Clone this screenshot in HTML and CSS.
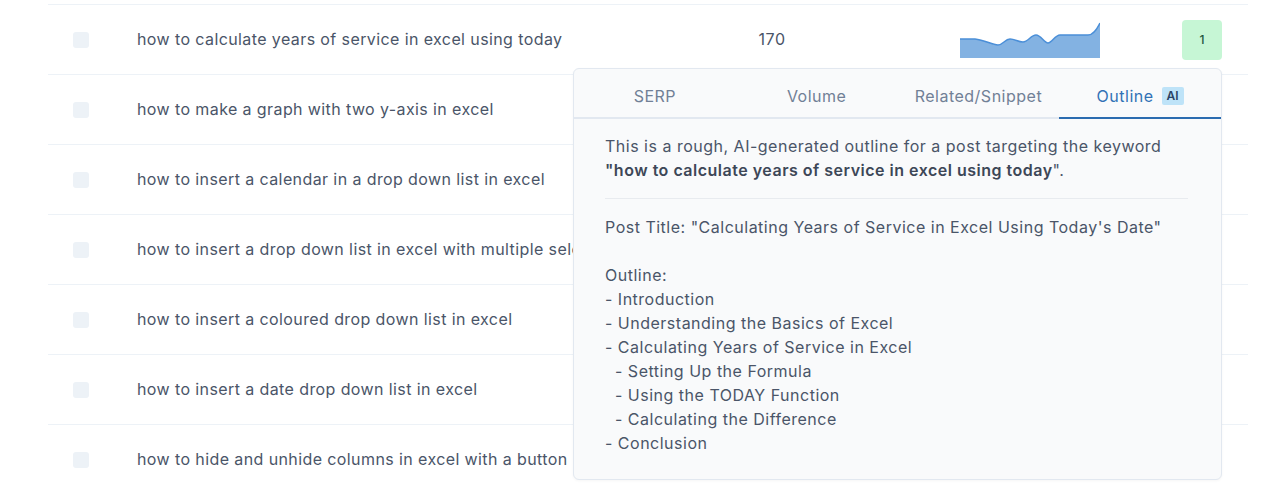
FILE: index.html
```html
<!DOCTYPE html>
<html lang="en">
<head>
<meta charset="utf-8">
<title>Keywords</title>
<link rel="stylesheet" href="styles.css">
</head>
<body>
<div class="page">
  <div class="table">
    <div class="row">
      <div class="cell-check"><span class="checkbox"></span></div>
      <div class="kw">how to calculate years of service in excel using today</div>
      <div class="vol">170</div>
      <div></div>
      <div class="spark">
        <svg width="140" height="37" viewBox="0 0 140 37">
          <path class="area" d="M0 18 L15 18 C25 19 32 24 38 24 C43 24 45 18 50 18 C55 18 58 21 63 21 C68 21 71 14 76 14 C81 14 84 22 88 22 C92 22 95 14 100 14 L128 14 C133 14 137 8 140 2 L140 37 L0 37 Z"/>
          <path class="line" d="M0 18 L15 18 C25 19 32 24 38 24 C43 24 45 18 50 18 C55 18 58 21 63 21 C68 21 71 14 76 14 C81 14 84 22 88 22 C92 22 95 14 100 14 L128 14 C133 14 137 8 140 2"/>
        </svg>
      </div>
      <div></div>
      <div class="badge">1</div>
    </div>
    <div class="row">
      <div class="cell-check"><span class="checkbox"></span></div>
      <div class="kw">how to make a graph with two y-axis in excel</div>
    </div>
    <div class="row">
      <div class="cell-check"><span class="checkbox"></span></div>
      <div class="kw">how to insert a calendar in a drop down list in excel</div>
    </div>
    <div class="row">
      <div class="cell-check"><span class="checkbox"></span></div>
      <div class="kw">how to insert a drop down list in excel with multiple selections</div>
    </div>
    <div class="row">
      <div class="cell-check"><span class="checkbox"></span></div>
      <div class="kw">how to insert a coloured drop down list in excel</div>
      <div></div><div></div><div></div><div></div>
      <div class="badge">1</div>
    </div>
    <div class="row">
      <div class="cell-check"><span class="checkbox"></span></div>
      <div class="kw">how to insert a date drop down list in excel</div>
    </div>
    <div class="row">
      <div class="cell-check"><span class="checkbox"></span></div>
      <div class="kw">how to hide and unhide columns in excel with a button</div>
    </div>
  </div>

  <div class="popover">
    <div class="tabs">
      <div class="tab">SERP</div>
      <div class="tab">Volume</div>
      <div class="tab">Related/Snippet</div>
      <div class="tab active">Outline <span class="ai">AI</span></div>
    </div>
    <div class="pop-body">
      <p class="intro">This is a rough, AI-generated outline for a post targeting the keyword <strong>"how to calculate years of service in excel using today</strong>".</p>
      <hr class="divider">
      <div class="outline">Post Title: "Calculating Years of Service in Excel Using Today's Date"

Outline:
- Introduction
- Understanding the Basics of Excel
- Calculating Years of Service in Excel
  - Setting Up the Formula
  - Using the TODAY Function
  - Calculating the Difference
- Conclusion</div>
    </div>
  </div>
</div>
</body>
</html>
```
FILE: styles.css
```css
* { box-sizing: border-box; }
html, body { margin: 0; padding: 0; background: #ffffff; }
body {
  font-family: Inter, "Open Sans", "DejaVu Sans", sans-serif;
  color: #4a5568;
  overflow: hidden;
}
.page {
  position: relative;
  padding: 4px 24px 0 48px;
  height: 489px;
}
.table {
  width: 1200px;
}
.row {
  display: grid;
  grid-template-columns: 89px 563px 144px 1fr 140px 82px 40px;
  align-items: center;
  height: 70px;
  border-top: 1px solid #edf2f7;
  padding-right: 26px;
}
.cell-check {
  padding-left: 25px;
  display: flex;
  align-items: center;
}
.checkbox {
  display: block;
  width: 16px;
  height: 16px;
  border-radius: 3px;
  background: #edf2f7;
}
.kw {
  font-size: 16px;
  letter-spacing: 0.4px;
  color: #4a5568;
  white-space: nowrap;
  padding-bottom: 1px;
}
.vol {
  font-size: 16px;
  letter-spacing: 0.6px;
  text-align: center;
  color: #4a5568;
  padding-bottom: 1px;
}
.spark svg { display: block; }
.spark .area { fill: #83b2e2; }
.spark .line { fill: none; stroke: #4b8fd8; stroke-width: 1.5; }
.badge {
  width: 40px;
  height: 40px;
  border-radius: 4px;
  background: #c6f6d5;
  color: #22543d;
  font-size: 12px;
  font-weight: 500;
  display: flex;
  align-items: center;
  justify-content: center;
}

.popover {
  position: absolute;
  top: 68px;
  left: 573px;
  width: 649px;
  background: #f9fafb;
  border: 1px solid #e2e8f0;
  border-radius: 6px;
  box-shadow: 0 1px 3px rgba(0, 0, 0, 0.04);
  font-size: 16px;
  letter-spacing: 0.5px;
  color: #4a5568;
}
.tabs {
  display: grid;
  grid-template-columns: repeat(4, 1fr);
}
.tab {
  display: flex;
  align-items: center;
  justify-content: center;
  gap: 8px;
  padding: 15px 0 9px;
  line-height: 24px;
  border-bottom: 2px solid #e2e8f0;
  color: #718096;
}
.tab.active {
  color: #3172b6;
  border-bottom-color: #2b6cb0;
}
.ai {
  display: inline-block;
  background: #bee3f8;
  color: #2a4365;
  font-size: 12px;
  font-weight: 600;
  letter-spacing: 0;
  line-height: 18px;
  padding: 0 5px;
  border-radius: 2px;
}
.pop-body {
  padding: 15px 33px 24px 31px;
}
.intro {
  margin: 0;
  line-height: 24px;
}
.intro strong {
  font-weight: 600;
  color: #3d4757;
}
.divider {
  margin: 16px 0;
  border: 0;
  border-top: 1px solid #e8ebef;
  height: 0;
}
.outline {
  white-space: pre-wrap;
  line-height: 24px;
}
```
